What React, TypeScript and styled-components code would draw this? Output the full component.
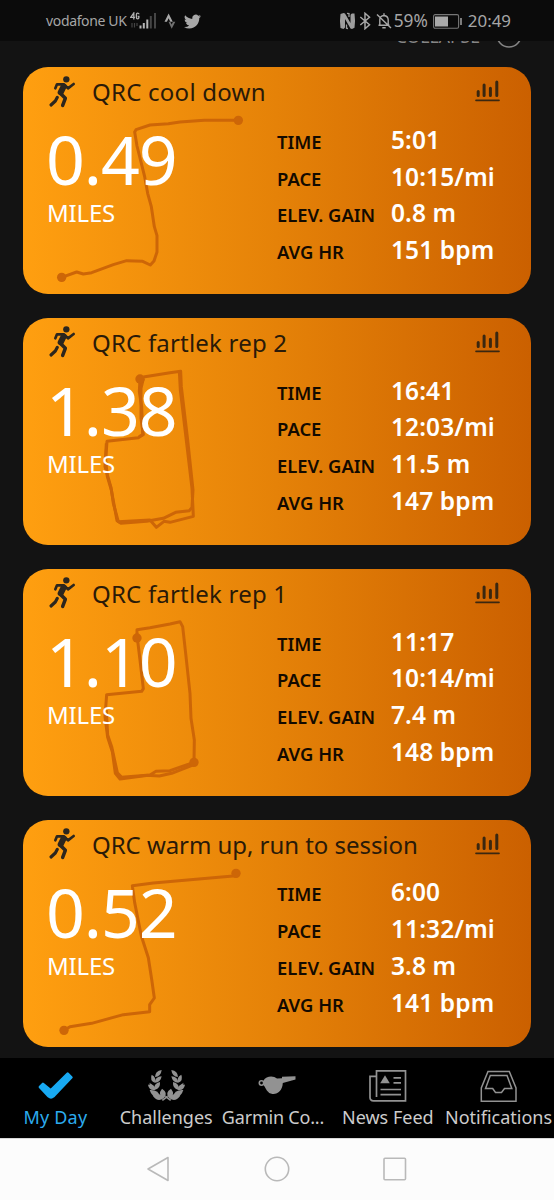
import React from "react";
import styled, { createGlobalStyle } from "styled-components";

const GlobalStyle = createGlobalStyle`
  * { box-sizing: border-box; }
  body {
    margin: 0;
    background: #131313;
    font-family: "Noto Sans", "Open Sans", sans-serif;
  }
  svg { display: block; flex: none; }
`;

const Screen = styled.div`
  width: 554px;
  height: 1200px;
  display: flex;
  flex-direction: column;
  overflow: hidden;
  background: #131313;
`;

const StatusBar = styled.header`
  height: 41px;
  flex: none;
  display: flex;
  align-items: center;
  justify-content: space-between;
  padding: 1px 43px 0 46px;
  background: #0b0b0b;
  color: #a6a6a6;
`;

const StatusGroup = styled.div`
  display: flex;
  align-items: center;
`;

const StatusText = styled.span<{ $size: number; $spacing?: number }>`
  font-size: ${(p) => p.$size}px;
  letter-spacing: ${(p) => p.$spacing ?? 0}px;
  line-height: 24px;
  white-space: nowrap;
`;

const StatusIcon = styled.svg<{ $left?: number; $right?: number }>`
  margin-left: ${(p) => p.$left ?? 0}px;
  margin-right: ${(p) => p.$right ?? 0}px;
`;

const Feed = styled.main`
  flex: 1;
  min-height: 0;
  overflow: hidden;
`;

const CollapseRow = styled.div`
  height: 26px;
  margin-top: -19px;
  margin-bottom: 19px;
  padding-right: 32px;
  display: flex;
  align-items: center;
  justify-content: flex-end;
  gap: 16px;
  color: #858585;
  font-size: 17.6px;
  line-height: 26px;
`;

const CollapseLabel = styled.span`
  padding-top: 1px;
`;

const CardList = styled.div`
  display: flex;
  flex-direction: column;
  gap: 23.9px;
  padding: 0 23px;
`;

const Card = styled.article`
  position: relative;
  height: 227px;
  border-radius: 25px;
  overflow: hidden;
  background: linear-gradient(90deg, #ff9f10 0%, #e58208 50%, #cb6000 100%);
`;

const Route = styled.svg`
  position: absolute;
  inset: 0;
  width: 508px;
  height: 227px;
`;

const CardHead = styled.div`
  position: relative;
  height: 49px;
  display: flex;
  align-items: center;
  padding: 0 31px 0 25px;
`;

const Title = styled.h2<{ $spacing: number }>`
  flex: 1;
  margin: 1px 0 0 16px;
  font-size: 24px;
  font-weight: 400;
  line-height: 36px;
  letter-spacing: ${(p) => p.$spacing}px;
  white-space: nowrap;
  color: #2a1a08;
`;

const CardBody = styled.div`
  position: relative;
  display: flex;
  padding-left: 24px;
`;

const DistanceBlock = styled.div`
  width: 230px;
  padding-top: 6px;
  color: #fff;
`;

const Distance = styled.div`
  font-size: 68px;
  line-height: 73px;
  letter-spacing: -1.1px;
  margin-left: -1px;
`;

const Unit = styled.div`
  font-size: 24px;
  line-height: 36px;
  letter-spacing: -0.2px;
`;

const Stats = styled.dl`
  margin: 0;
  padding-top: 5.8px;
`;

const StatRow = styled.div`
  display: flex;
  align-items: baseline;
  height: 36.8px;
  line-height: 36.8px;
  white-space: nowrap;
`;

const StatName = styled.dt`
  width: 114px;
  font-size: 18.4px;
  font-weight: 600;
  color: #130a00;
`;

const StatValue = styled.dd`
  margin: 0;
  font-size: 24.5px;
  font-weight: 600;
  letter-spacing: 0.1px;
  color: #fff;
`;

const TabBar = styled.nav`
  height: 80px;
  flex: none;
  display: grid;
  grid-template-columns: repeat(5, 110.8px);
  background: #000;
`;

const Tab = styled.div<{ $active?: boolean }>`
  display: flex;
  flex-direction: column;
  align-items: center;
  padding-top: 10px;
  color: ${(p) => (p.$active ? "#18a9f2" : "#929292")};
`;

const TabLabel = styled.span<{ $active?: boolean; $spacing?: number; $shift?: number }>`
  margin-top: 1px;
  margin-left: ${(p) => p.$shift ?? 0}px;
  font-size: 18px;
  line-height: 26px;
  letter-spacing: ${(p) => p.$spacing ?? 0}px;
  white-space: nowrap;
  color: ${(p) => (p.$active ? "#2cabee" : "#cccccc")};
`;

const SystemNav = styled.footer`
  height: 62px;
  flex: none;
  display: flex;
  justify-content: center;
  align-items: center;
  gap: 92px;
  padding-bottom: 1px;
  border-top: 1px solid #d8d8d8;
  background: #fcfcfc;
`;

const RunnerIcon = () => (
  <svg width="28" height="34" viewBox="84 43 84 102" fill="none" stroke="#2c261e" strokeLinecap="round" strokeLinejoin="round">
    <circle cx="139" cy="56" r="9.5" fill="#2c261e" stroke="none" />
    <path d="M106 83 L111 71 L131 71 L144 83 L161 70" strokeWidth="8" />
    <path d="M131 77 L122 95" strokeWidth="18" />
    <path d="M121 98 L136 113 L128 134" strokeWidth="10.5" />
    <path d="M112 110 L106 121 L93 133" strokeWidth="9.5" />
  </svg>
);

const ChartIcon = () => (
  <svg width="25" height="23" viewBox="0 0 25 23" stroke="#3a2710" strokeLinecap="round" fill="none">
    <path d="M3.2 11.4V15.4M9.1 5V15.4M15.4 8.3V15.4M21.8 2V15.4" strokeWidth="3" />
    <path d="M1 20.4H24" strokeWidth="1.6" />
  </svg>
);

const CheckIcon = () => (
  <svg width="36" height="35" viewBox="112 54 108 105">
    <path
      d="M121 111L130 102L153 121L204 71L215 82L161 139Q154 145 147 139Z"
      fill="currentColor"
      stroke="currentColor"
      strokeWidth="8"
      strokeLinejoin="round"
    />
  </svg>
);

// Each leaf runs from its base to its tip, with a bulge on either side.
const leafPath = ([x1, y1, x2, y2, bulge]: number[]) => {
  const dx = x2 - x1;
  const dy = y2 - y1;
  const length = Math.hypot(dx, dy);
  const nx = (-dy / length) * bulge;
  const ny = (dx / length) * bulge;
  const mx = x1 + dx * 0.45;
  const my = y1 + dy * 0.45;
  return `M${x1} ${y1}Q${mx + nx} ${my + ny} ${x2} ${y2}Q${mx - nx} ${my - ny} ${x1} ${y1}Z`;
};

const leaves = [
  [464, 81, 484, 60, 12],
  [463, 98, 454, 74, 12],
  [463, 98, 484, 79, 12],
  [465, 119, 443, 104, 14],
  [462, 119, 479, 96, 14],
  [480, 142, 448, 120, 17],
  [465, 120, 447, 98, 7],
  [490, 145, 458, 138, 17],
  [490, 145, 485, 116, 18],
];

const HalfWreath = () => (
  <g fill="currentColor">
    {leaves.map((l) => (
      <path key={l.join()} d={leafPath(l)} />
    ))}
    <path d="M486 151L502 139" stroke="currentColor" strokeWidth="5" />
  </g>
);

const LaurelIcon = () => (
  <svg width="37" height="35" viewBox="443 54 111 105">
    <HalfWreath />
    <g transform="translate(997 0) scale(-1 1)">
      <HalfWreath />
    </g>
  </svg>
);

const WhistleIcon = () => (
  <svg width="38" height="35" viewBox="0 0 38 35">
    <circle cx="3.5" cy="15" r="2.2" fill="none" stroke="currentColor" strokeWidth="1.6" />
    <path d="M5.5 12.5 C8 8 15 7 19 10.5 L24 10.3 V8.8 L37.5 8.2 V11.5 L24.8 15 C24.5 22 20 26.5 14.5 26 C9.5 25.5 8 20.5 5.5 17Z" fill="currentColor" />
  </svg>
);

const NewsIcon = () => (
  <svg width="38" height="35" viewBox="0 0 38 35" fill="none" stroke="currentColor" strokeWidth="1.7">
    <path d="M7.5 29V2.9H36.5V32.8H4.5C2.5 32.8 1 31.7 1 29.5V8.3H7.5" />
    <path d="M11.5 21.5H32M11.5 26.6H32M24.5 9.8H32M24.5 14.8H32" />
    <path d="M16 7.3 L20.8 15.3 H11.2Z" fill="currentColor" stroke="none" />
  </svg>
);

const InboxIcon = () => (
  <svg width="37" height="35" viewBox="0 0 37 35" fill="none" stroke="currentColor" strokeWidth="1.5">
    <path d="M8 3.5H29.3L36 20V33.3H1.3V20Z" />
    <path d="M10.3 7.5H27L31.8 20.5H24.5L21.5 24.5H15.5L12.7 20.5H5.5Z" />
  </svg>
);

type Activity = {
  title: string;
  spacing: number;
  distance: string;
  stats: [string, string][];
  top: number;
  routes: string[];
  dots: [number, number][];
};

const activities: Activity[] = [
  {
    title: "QRC cool down",
    spacing: 0.25,
    distance: "0.49",
    stats: [["TIME", "5:01"], ["PACE", "10:15/mi"], ["ELEV. GAIN", "0.8 m"], ["AVG HR", "151 bpm"]],
    top: 21,
    routes: [
      "M655 181 H553 L480 186 L445 191 L390 195 L348 209 L344 216 L351 258 L374 350 L383 400 L394 440 L403 500 L411 527 V576 L402 603 L391 615 L368 604 L320 602 L280 614 L215 638 L190 642 L170 636 L125 652",
    ],
    dots: [[655, 181], [125, 652]],
  },
  {
    title: "QRC fartlek rep 2",
    spacing: 0.2,
    distance: "1.38",
    stats: [["TIME", "16:41"], ["PACE", "12:03/mi"], ["ELEV. GAIN", "11.5 m"], ["AVG HR", "147 bpm"]],
    top: 24,
    routes: [
      "M360 206 L358 245 L365 290 L368 374 L355 383 L261 394 L257 450 L262 500 L274 540 L291 632 L303 640 L380 634 L430 625 L467 607 L508 602 L516 592 L519 540 L503 390 L484 230 L482 184 L450 188 L370 201",
      "M370 206 L363 235 L363 325 L370 374 L357 380 M259 400 L255 470 L273 532 L280 580 L295 635 L390 630 L409 652 L432 634 L450 637 L520 619 L516 535 L500 400 L481 240 L478 184",
    ],
    dots: [[360, 207]],
  },
  {
    title: "QRC fartlek rep 1",
    spacing: 0.2,
    distance: "1.10",
    stats: [["TIME", "11:17"], ["PACE", "10:14/mi"], ["ELEV. GAIN", "7.4 m"], ["AVG HR", "148 bpm"]],
    top: 27,
    routes: [
      "M351 234 V209 L390 203 L450 192 L480 185 L488 200 L497 280 L510 400 L513 475 L523 540 L522 607 L450 632 L408 634 L390 645 L300 657 L286 640 L277 575 L263 532 L255 470 L260 404 L365 394 L370 386 L360 300 L352 234",
      "M522 614 L455 640 L418 648 L380 646 L305 652 L292 638 L275 560 L263 525 L259 450",
    ],
    dots: [[351, 234], [522, 607]],
  },
  {
    title: "QRC warm up, run to session",
    spacing: -0.05,
    distance: "0.52",
    stats: [["TIME", "6:00"], ["PACE", "11:32/mi"], ["ELEV. GAIN", "3.8 m"], ["AVG HR", "141 bpm"]],
    top: 22,
    routes: [
      "M648 189 L400 211 L337 219 L344 270 L364 370 L385 435 L395 500 L403 556 L389 576 V597 L310 606 L215 632 L150 642 L132 653",
    ],
    dots: [[648, 182], [132, 653]],
  },
];

const ActivityCard = ({ a }: { a: Activity }) => (
  <Card>
    <Route viewBox={`9 ${a.top} 1524 681`}>
      <g fill="none" stroke="#cd6607" strokeWidth="9" strokeLinejoin="round">
        {a.routes.map((d) => (
          <path key={d} d={d} />
        ))}
      </g>
      {a.dots.map(([x, y]) => (
        <circle key={`${x}-${y}`} cx={x} cy={y} r="14" fill="#cd6607" />
      ))}
    </Route>
    <CardHead>
      <RunnerIcon />
      <Title $spacing={a.spacing}>{a.title}</Title>
      <ChartIcon />
    </CardHead>
    <CardBody>
      <DistanceBlock>
        <Distance>{a.distance}</Distance>
        <Unit>MILES</Unit>
      </DistanceBlock>
      <Stats>
        {a.stats.map(([name, value]) => (
          <StatRow key={name}>
            <StatName>{name}</StatName>
            <StatValue>{value}</StatValue>
          </StatRow>
        ))}
      </Stats>
    </CardBody>
  </Card>
);

export default function App() {
  return (
    <Screen>
      <GlobalStyle />
      <StatusBar>
        <StatusGroup>
          <StatusText $size={14} $spacing={-0.35}>vodafone UK</StatusText>
          <StatusIcon $left={3} width="27" height="18" viewBox="0 0 27 18">
            <g fill="none" stroke="#b0b0b0" strokeWidth="1.3">
              <path d="M3.8 7.5V1L.8 5.3H5" />
              <path d="M8.9 2.2C8.9 .8 6.4 .8 6.4 2.5V5.5C6.4 7.3 8.9 7.3 8.9 5.5V4.5H7.7" />
            </g>
            <path d="M2 11V15.5M4.5 11V15.5M7 14L7 11" stroke="#444" strokeWidth="1.2" />
            <path d="M10.5 13.5V16.5M13.8 11V16.5M17.3 7.5V16.5" stroke="#b5b5b5" strokeWidth="2" />
            <path d="M20.8 4V16.5M25 1V16.5" stroke="#454545" strokeWidth="2" />
          </StatusIcon>
          <StatusIcon $left={7} width="12" height="18" viewBox="0 0 12 18">
            <path d="M.5 9.7L4.6 1.5L8.8 9.7H6.3L4.6 6.3L3 9.7Z" fill="#a8a8a8" />
            <path d="M4.5 9.7H6.3L7.7 12.5L9 9.7H11.3L7.7 16.8Z" fill="#707070" />
          </StatusIcon>
          <StatusIcon $left={8} width="17" height="15" viewBox="0 0 24 21">
            <path
              fill="#a8a8a8"
              d="M23.95 3.1a10 10 0 0 1-2.82.77 4.96 4.96 0 0 0 2.16-2.72c-.95.55-2 .95-3.13 1.18a4.92 4.92 0 0 0-8.38 4.48C7.7 6.6 4.1 4.65 1.68 1.7a4.93 4.93 0 0 0 1.52 6.57 4.9 4.9 0 0 1-2.23-.61v.06a4.92 4.92 0 0 0 3.95 4.83 5 5 0 0 1-2.21.08 4.94 4.94 0 0 0 4.6 3.42A9.87 9.87 0 0 1 0 18.1a13.94 13.94 0 0 0 7.55 2.2c9.05 0 14-7.5 14-13.98 0-.21 0-.42-.02-.63a9.94 9.94 0 0 0 2.46-2.55z"
            />
          </StatusIcon>
        </StatusGroup>
        <StatusGroup>
          <StatusIcon width="17" height="18" viewBox="0 0 17 18">
            <path d="M4.5 17L1.5 16Q.4 9 1.5 1.9L4.5 .9L6 1.5L11.5 11V3.5Q11.5 2 13 1.5L15.5 1.5Q16.6 9 15.5 15.8L13 17L11.5 16.5L6 7V15.5Z" fill="#9d9d9d" />
            <path d="M8 1.4L10 1.6V5M9 16.5L7.5 16.3V12.5" fill="none" stroke="#9d9d9d" strokeWidth="1.3" />
          </StatusIcon>
          <StatusIcon $left={3} width="12" height="18" viewBox="0 0 12 18">
            <path d="M1.3 5L10.5 12.7L6 16.7V1.3L10.5 5.3L1.3 13" fill="none" stroke="#a8a8a8" strokeWidth="1.5" />
          </StatusIcon>
          <StatusIcon $left={5} $right={2} width="16" height="18" viewBox="0 0 16 18">
            <path d="M2.5 13.3H13.5M3.8 13V7.5Q4 4 8 3.5Q12.2 4 12.2 8V13M8 1.3V3.5M6.3 15.8H9.7M1 2.5L15 16" fill="none" stroke="#a8a8a8" strokeWidth="1.4" />
          </StatusIcon>
          <StatusText $size={17.3}>59%</StatusText>
          <StatusIcon $left={5} $right={6} width="29" height="15" viewBox="0 0 29 15">
            <rect x=".6" y=".6" width="25" height="13.6" rx="1.5" fill="none" stroke="#777" strokeWidth="1.1" />
            <rect x="2" y="2.5" width="13" height="10" fill="#aaa" />
            <path d="M28 4V11" stroke="#999" strokeWidth="1.6" />
          </StatusIcon>
          <StatusText $size={16.9}>20:49</StatusText>
        </StatusGroup>
      </StatusBar>

      <Feed>
        <CollapseRow>
          <CollapseLabel>COLLAPSE</CollapseLabel>
          <svg width="26" height="26" viewBox="0 0 26 26">
            <circle cx="13" cy="13" r="12" fill="none" stroke="#858585" strokeWidth="1.6" />
          </svg>
        </CollapseRow>
        <CardList>
          {activities.map((a) => (
            <ActivityCard key={a.title} a={a} />
          ))}
        </CardList>
      </Feed>

      <TabBar>
        <Tab $active>
          <CheckIcon />
          <TabLabel $active $spacing={0.2}>My Day</TabLabel>
        </Tab>
        <Tab>
          <LaurelIcon />
          <TabLabel>Challenges</TabLabel>
        </Tab>
        <Tab>
          <WhistleIcon />
          <TabLabel $shift={-8} $spacing={-0.2}>Garmin Co...</TabLabel>
        </Tab>
        <Tab>
          <NewsIcon />
          <TabLabel>News Feed</TabLabel>
        </Tab>
        <Tab>
          <InboxIcon />
          <TabLabel>Notifications</TabLabel>
        </Tab>
      </TabBar>

      <SystemNav>
        <svg width="26" height="28" viewBox="0 0 26 28" fill="none" stroke="#b9b9b9" strokeWidth="1.6" strokeLinejoin="round">
          <path d="M22 2.5V25.5L2 14Z" />
        </svg>
        <svg width="26" height="28" viewBox="0 0 26 28" fill="none" stroke="#b9b9b9" strokeWidth="1.6">
          <circle cx="13" cy="14" r="11.7" />
        </svg>
        <svg width="26" height="28" viewBox="0 0 26 28" fill="none" stroke="#b9b9b9" strokeWidth="1.6">
          <rect x="2" y="3.3" width="21.5" height="21.5" rx="1" />
        </svg>
      </SystemNav>
    </Screen>
  );
}
